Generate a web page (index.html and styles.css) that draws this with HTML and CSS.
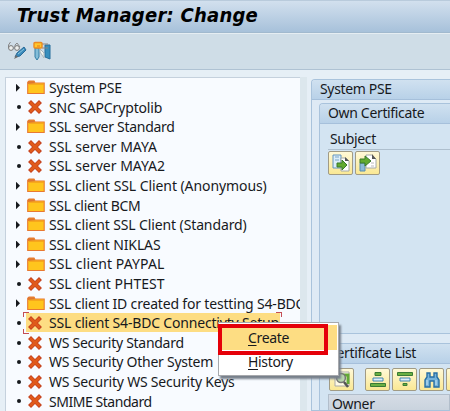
FILE: index.html
```html
<!DOCTYPE html>
<html lang="en">
<head>
<meta charset="utf-8">
<title>Trust Manager: Change</title>
<link rel="stylesheet" href="styles.css">
</head>
<body>
<svg class="defs" width="0" height="0">
  <symbol id="folder" viewBox="0 0 18 15"><path d="M.7 13.5V2.2L2 1h5l1 2h9.2v10.5z" fill="#ffc51d" stroke="#e87932" stroke-width="1.1"/><path d="M1 4V1.3h6l1 2.2z" fill="#df7632"/><path d="M2 4.3h15" stroke="#f5a11c"/></symbol>
  <symbol id="cross" viewBox="0 0 14 14"><path d="M3 3 11 11M11 3 3 11" stroke="#c5421f" stroke-width="4.2" stroke-linecap="square"/><path d="M3 3 11 11M11 3 3 11" stroke="#e05a1a" stroke-width="2.6" stroke-linecap="round"/></symbol>
</svg>
<header class="title"><h1>Trust Manager: Change</h1></header>
<nav class="toolbar">
  <svg width="20" height="20" viewBox="0 0 20 20" fill="none"><path d="M1.5 7V4l2-3M8 6V4l2-2 3 4" stroke="#888"/><circle cx="4" cy="7" r="2.4" fill="#edf0ee" stroke="#777"/><circle cx="10" cy="7" r="2.4" fill="#edf0ee" stroke="#777"/><path d="m8 16 2-4 7-6 2 3-6 6z" fill="#398abb" stroke="#286a99"/><path d="m11 13 6-5" stroke="#8bc6df"/><path d="m7 18 2-4 2 2z" fill="#6e6c6b"/></svg>
  <svg width="20" height="20" viewBox="0 0 20 20"><path d="M2 7h4v9l-2 3-2-3z" fill="#83bdd8" stroke="#327da5"/><path d="M12 4h5v14l-5-2z" fill="#388fbd" stroke="#276f9c"/><path d="m7 8 4 4v5l-4-6z" fill="#f4f5ef" stroke="#a9b6bb"/><path d="M8 3h7M9 7h6" stroke="#8b8580"/><rect x="1" y="1.5" width="8" height="5.5" rx="1" fill="#ffc82b" stroke="#eb8a22" stroke-width="1.4"/><path d="M4 5h3" stroke="#e8751b"/></svg>
</nav>
<main>
  <ul class="tree">
    <li><i class="arrow"></i><svg class="fo"><use href="#folder"/></svg><span>System PSE</span></li>
    <li><i class="dot"></i><svg class="cr"><use href="#cross"/></svg><span>SNC SAPCryptolib</span></li>
    <li><i class="arrow"></i><svg class="fo"><use href="#folder"/></svg><span>SSL server Standard</span></li>
    <li><i class="dot"></i><svg class="cr"><use href="#cross"/></svg><span>SSL server MAYA</span></li>
    <li><i class="dot"></i><svg class="cr"><use href="#cross"/></svg><span>SSL server MAYA2</span></li>
    <li><i class="arrow"></i><svg class="fo"><use href="#folder"/></svg><span>SSL client SSL Client (Anonymous)</span></li>
    <li><i class="arrow"></i><svg class="fo"><use href="#folder"/></svg><span>SSL client BCM</span></li>
    <li><i class="arrow"></i><svg class="fo"><use href="#folder"/></svg><span>SSL client SSL Client (Standard)</span></li>
    <li><i class="arrow"></i><svg class="fo"><use href="#folder"/></svg><span>SSL client NIKLAS</span></li>
    <li><i class="arrow"></i><svg class="fo"><use href="#folder"/></svg><span>SSL client PAYPAL</span></li>
    <li><i class="dot"></i><svg class="cr"><use href="#cross"/></svg><span>SSL client PHTEST</span></li>
    <li><i class="arrow"></i><svg class="fo"><use href="#folder"/></svg><span>SSL client ID created for testting S4-BDC</span></li>
    <li class="selected"><i class="dot"></i><svg class="cr"><use href="#cross"/></svg><span>SSL client S4-BDC Connectivty Setup</span></li>
    <li><i class="dot"></i><svg class="cr"><use href="#cross"/></svg><span>WS Security Standard</span></li>
    <li><i class="dot"></i><svg class="cr"><use href="#cross"/></svg><span>WS Security Other System</span></li>
    <li><i class="dot"></i><svg class="cr"><use href="#cross"/></svg><span>WS Security WS Security Keys</span></li>
    <li><i class="dot"></i><svg class="cr"><use href="#cross"/></svg><span>SMIME Standard</span></li>
  </ul>
  <div class="splitter"></div>
  <section class="pse">
    <h2>System PSE</h2>
    <section class="own">
      <h3>Own Certificate</h3>
      <label>Subject</label>
      <div class="buttons">
        <button><svg width="20" height="20" viewBox="0 0 20 20"><path d="M2 2h8v13H2z" fill="#dceefa" stroke="#6294bd"/><path d="M4 4h4M4 7h4" stroke="#7ba6c7"/><path d="M10 5h5l3 3v10h-8z" fill="#fff" stroke="#a4aaa8"/><path d="M14 4v4h4z" fill="#555"/><path d="M6 10h5V7l5 5-5 5v-3H6z" fill="#62aa30" stroke="#397b2b"/></svg></button>
        <button><svg width="20" height="20" viewBox="0 0 20 20"><path d="M2 10h5v8H2z" fill="#8ebbd9" stroke="#568cb0"/><path d="M8 2h6l4 4v9H8z" fill="#fff" stroke="#a4aaa8"/><path d="M14 1v5h4z" fill="#555"/><path d="M2 6h5V3l6 5-6 5v-3H2z" fill="#62aa30" stroke="#397b2b"/><path d="M13 10h3M13 13h3" stroke="#bbb"/></svg></button>
      </div>
    </section>
    <section class="list">
      <h3>Certificate List</h3>
      <div class="buttons">
        <button><svg width="20" height="20" viewBox="0 0 20 20"><path d="M3 2h14v14H3z" fill="#fffbe6" stroke="#aaa"/><path d="M6 5h10v9" fill="none" stroke="#63a936" stroke-width="3"/><circle cx="9" cy="8" r="4.4" fill="#b9d6ae" stroke="#777" stroke-width="1.5"/><path d="m12 12 4 5" stroke="#555" stroke-width="2.5"/></svg></button>
        <i class="divider"></i>
        <button><svg width="20" height="20" viewBox="0 0 20 20"><path d="M7 2.5h6v3H7zM2.5 13.5h15v3h-15z" fill="#6bb042" stroke="#397b35"/><path d="M5 8h10v3H5z" fill="#dceefa" stroke="#4285b2"/></svg></button>
        <button><svg width="20" height="20" viewBox="0 0 20 20"><path d="M2.5 2.5h15v3h-15zM8 13.5h4v2H8z" fill="#6bb042" stroke="#397b35"/><path d="M5 8h10v3H5z" fill="#dceefa" stroke="#4285b2"/></svg></button>
        <button><svg width="20" height="20" viewBox="0 0 20 20"><path d="M5 3h3v4h4V3h3v4l2 3v7h-5v-6H8v6H3v-7l2-3z" fill="#75b3da" stroke="#276fa5" stroke-width="1.4"/><path d="M5 10v5M14 10v5" stroke="#c7e5f5"/></svg></button>
        <button><svg width="20" height="20" viewBox="0 0 20 20"><path d="M2 7h4v10H2z" fill="#d5e7ee" stroke="#6b9fbd"/></svg></button>
      </div>
      <div class="owner">Owner</div>
    </section>
  </section>
</main>
<div class="menu"><div class="create"><span><u>C</u>reate</span></div><div class="history"><u>H</u>istory</div></div>
</body>
</html>
```

FILE: styles.css
```css
* { box-sizing: border-box; }
body { margin: 0; width: 450px; height: 411px; overflow: hidden; background: #e6eff6; color: #17191d; font: 14px/19.58px "Noto Sans", sans-serif; letter-spacing: -.34px; white-space: nowrap; }
h1, h2, h3, ul { margin: 0; padding: 0; font-weight: normal; }
.defs { position: absolute; }
.title { height: 33px; border-top: 1px solid #b9cbdc; border-bottom: 1px solid #a1b9ce; background: linear-gradient(#d2e0ee, #a7c1da); padding-left: 17px; }
h1 { color: #000; font: italic bold 20px/29px "DejaVu Sans Condensed", "DejaVu Sans", sans-serif; font-stretch: condensed; letter-spacing: .25px; }
.toolbar { height: 37px; border-top: 1px solid #e5edf2; border-bottom: 1px solid #afc2d3; background: #cfdde7; padding: 7px 0 0 7px; display: flex; gap: 6px; }
main { height: 341px; padding-top: 7px; display: flex; }
.tree { list-style: none; width: 295px; margin-left: 5px; padding: 0 0 0 4px; border: 1px solid #c5d1dd; border-width: 1px 0 0 1px; background: #f8fbff; overflow: hidden; }
.tree li { height: 19.6px; display: flex; align-items: center; position: relative; }
.tree li:nth-child(1) { letter-spacing: -.24px; }
.tree li:nth-child(2) { letter-spacing: -.15px; }
.tree li:nth-child(3) { letter-spacing: -.28px; }
.tree li:nth-child(4) { letter-spacing: 0; }
.tree li:nth-child(5) { letter-spacing: 0; }
.tree li:nth-child(6) { letter-spacing: -.08px; }
.tree li:nth-child(8) { letter-spacing: -.12px; }
.tree li:nth-child(9) { letter-spacing: -.12px; }
.tree li:nth-child(10) { letter-spacing: .12px; }
.tree li:nth-child(11) { letter-spacing: 0; }
.tree li:nth-child(12) { letter-spacing: -.18px; }
.tree li:nth-child(13) { letter-spacing: -.18px; }
.tree li:nth-child(14) { letter-spacing: -.28px; }
.tree li:nth-child(15) { letter-spacing: -.25px; }
.tree li:nth-child(16) { letter-spacing: -.2px; }
.tree li:nth-child(17) { letter-spacing: -.46px; }
.tree svg { flex: none; overflow: visible; }
.fo { width: 18px; height: 15px; margin: 0 4px 0 1px; }
.cr { width: 14px; height: 14px; margin: 0 7px 0 2px; }
.arrow { flex: none; margin-left: 6px; width: 10px; height: 8px; background: #17191d; clip-path: polygon(0 0, 4px 50%, 0 100%); }
.dot { flex: none; width: 4px; height: 4px; margin: 0 5px 0 7px; border-radius: 50%; background: #17191d; }
.selected { width: 271px; background: linear-gradient(#fddd83, #fddd83) 16px 0 / 254px 19px no-repeat; }
.selected::before, .selected::after { content: ""; position: absolute; left: 13px; top: -1px; width: 6px; height: 22px; background: linear-gradient(#c44e55, #c44e55) 0 0 / 6px 1px no-repeat, linear-gradient(#c44e55, #c44e55) 0 0 / 1px 5px no-repeat, linear-gradient(#c44e55, #c44e55) 0 100% / 6px 1px no-repeat, linear-gradient(#c44e55, #c44e55) 0 100% / 1px 5px no-repeat; }
.selected::after { left: auto; right: -1px; transform: scaleX(-1); }
.splitter { width: 7px; background: #dce7ed; }
.pse { flex: 1; margin: 2px 0 0 4px; border: 1px solid #a9c3dc; border-right: 0; border-radius: 4px 0 0; background: #deeaf5; overflow: hidden; }
h2, h3 { height: 20px; padding-left: 8px; font-size: 14px; line-height: 17px; background: linear-gradient(#d0e1f0, #b8d1e8); border-bottom: 1px solid #a6c0db; }
.own, .list { margin-left: 7px; border: 1px solid #a9c3dc; border-right: 0; border-radius: 4px 0 0; background: #d3e4f2; overflow: hidden; }
.own { margin-top: 3px; height: 231px; }
.own label { display: block; height: 26px; margin-left: 8px; padding: 5px 0 0 2px; border-bottom: 1px solid #aebfce; }
.buttons { display: flex; padding: 1px 0 0 8px; gap: 2px; }
button { width: 25px; height: 24px; padding: 1px; border: 1px solid #a19b85; border-radius: 2px; background: linear-gradient(#fff9d7, #fae894); flex: none; display: flex; justify-content: center; align-items: center; }
.list { margin-top: 9px; height: 90px; }
.list .buttons { padding: 4px 0 0 9px; }
.list button { height: 23px; }
.divider { width: 2px; height: 14px; margin: 5px 3px 0 4px; background: #b2c5d4; }
.owner { margin: 3px 0 0 8px; padding-left: 3px; height: 24px; line-height: 18px; border: 1px solid #b2becb; background: linear-gradient(#d5dce5, #c4cfda); }
.menu { position: absolute; left: 218px; top: 322px; width: 121px; height: 54px; background: #fff; border: 1px solid #a7a9ad; box-shadow: 2px 3px 2px #77808b; }
.create { height: 30px; margin: 1px 1px 0 -1px; background: linear-gradient(#fddd83, #fddd83) 0 1px / 100% 25px no-repeat; }
.create span { display: block; width: 110px; height: 31px; padding: 0 0 0 26px; border: 4px solid #e50009; }
.history { padding-left: 29px; line-height: 16px; }
u { text-underline-offset: 2px; text-decoration-thickness: 1px; }
```
